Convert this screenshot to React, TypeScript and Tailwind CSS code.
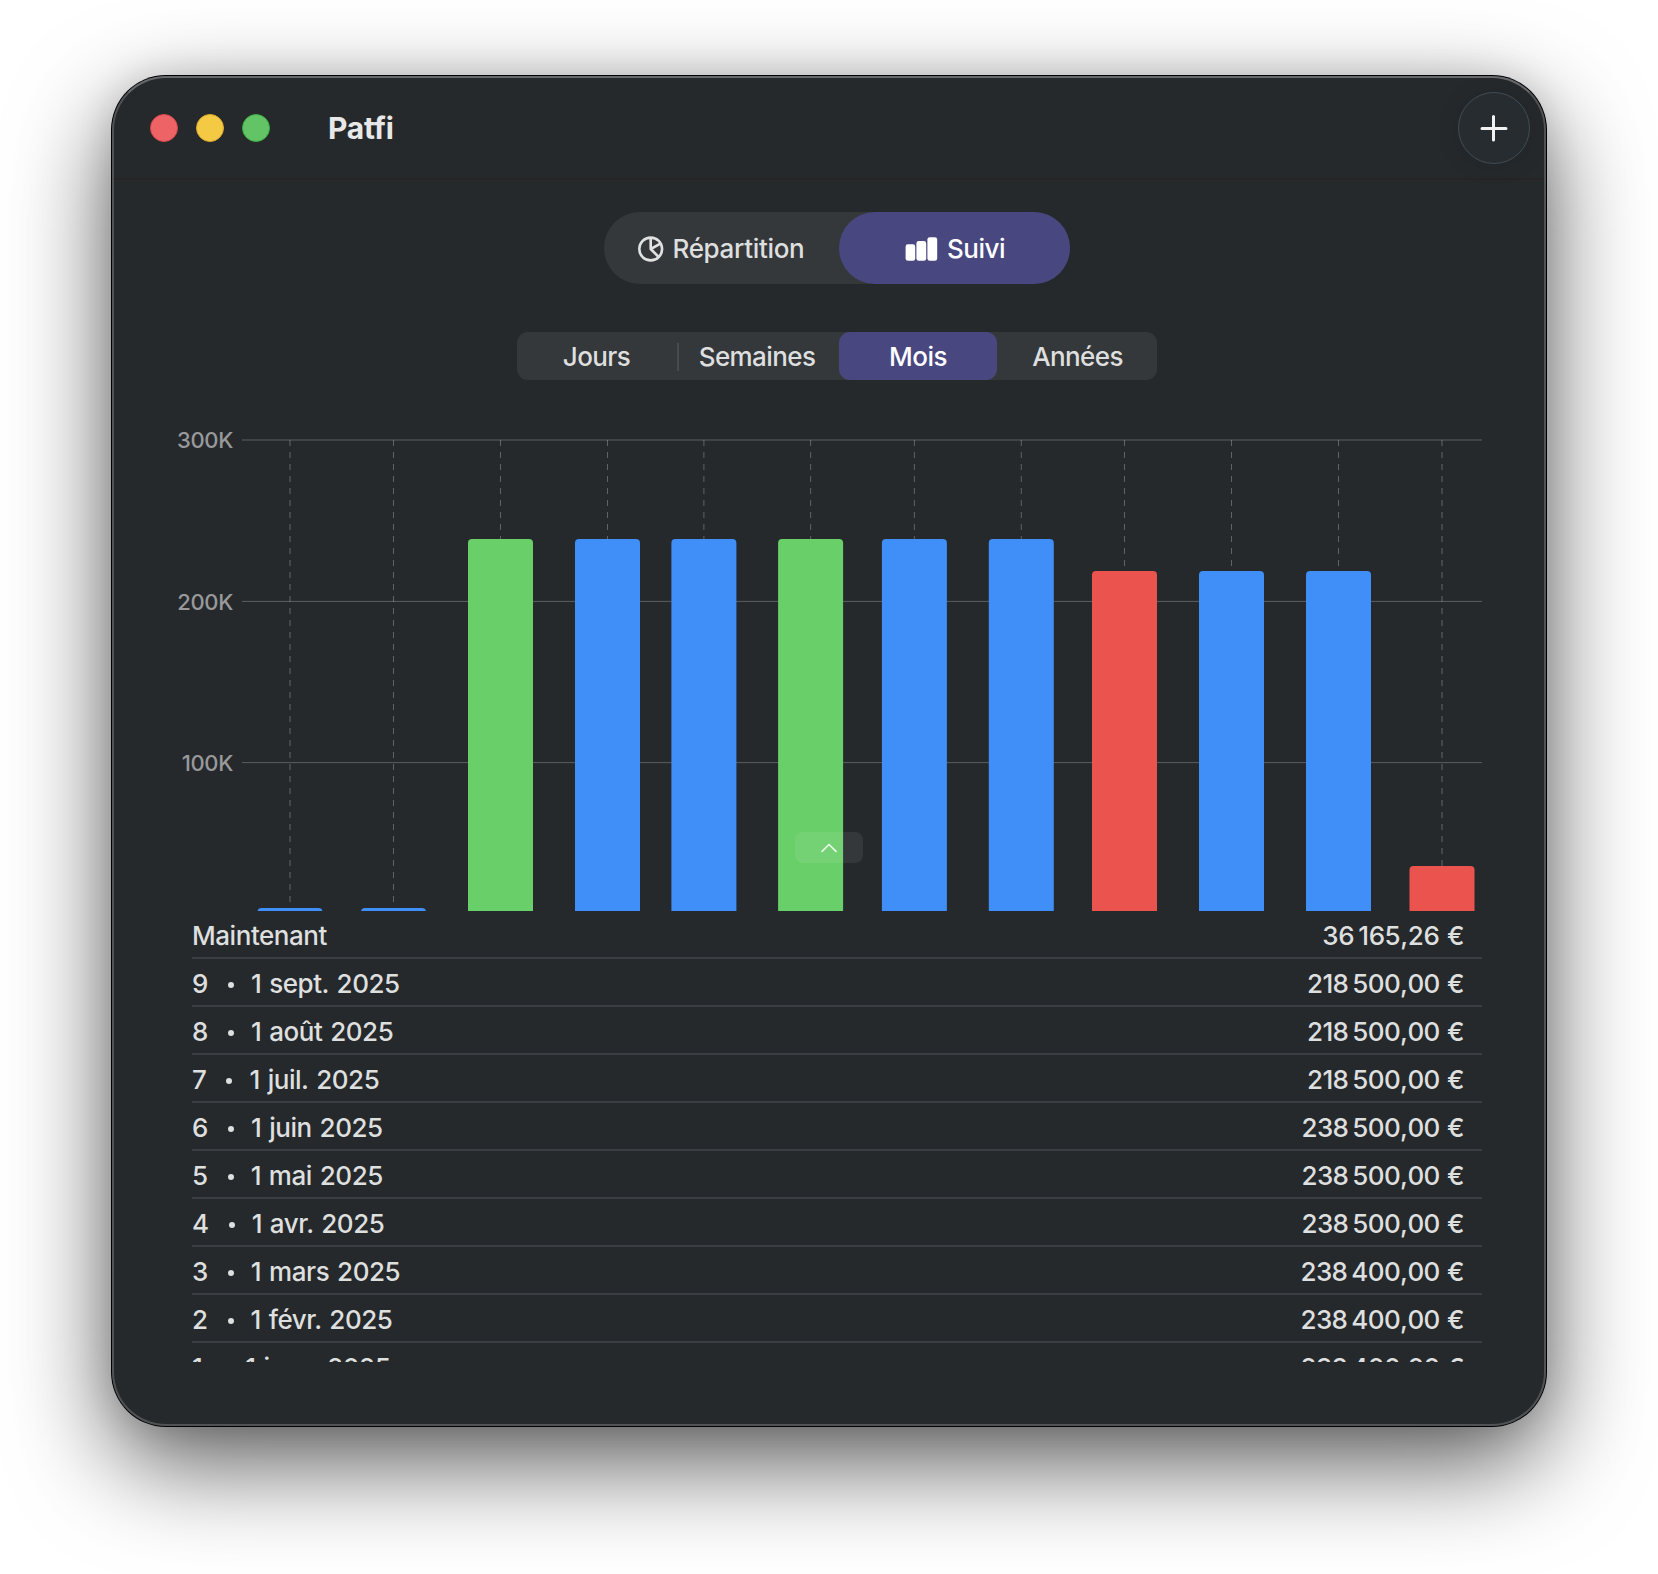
import React from "react";

type Tone = "blue" | "green" | "red";

const tones: Record<Tone, string> = {
  blue: "#408ef7",
  green: "#69cf69",
  red: "#eb544e",
};

const bars: { c: number; top: number; tone: Tone }[] = [
  { c: 290, top: 908, tone: "blue" },
  { c: 393.5, top: 908, tone: "blue" },
  { c: 500.5, top: 539, tone: "green" },
  { c: 607.5, top: 539, tone: "blue" },
  { c: 703.9, top: 539, tone: "blue" },
  { c: 810.6, top: 539, tone: "green" },
  { c: 914.4, top: 539, tone: "blue" },
  { c: 1021.3, top: 539, tone: "blue" },
  { c: 1124.5, top: 571, tone: "red" },
  { c: 1231.5, top: 571, tone: "blue" },
  { c: 1338.5, top: 571, tone: "blue" },
  { c: 1442, top: 866, tone: "red" },
];

const grid = [
  { y: 440, base: 448, h: 2, o: 0.13, label: "300K" },
  { y: 601.4, base: 610, h: 1, o: 0.25, label: "200K" },
  { y: 762.6, base: 771, h: 1, o: 0.25, label: "100K" },
];

const rows = [
  { n: "9", d: "1 sept. 2025", v: "218\u2009500,00" },
  { n: "8", d: "1 août 2025", v: "218\u2009500,00" },
  { n: "7", d: "1 juil. 2025", v: "218\u2009500,00" },
  { n: "6", d: "1 juin 2025", v: "238\u2009500,00" },
  { n: "5", d: "1 mai 2025", v: "238\u2009500,00" },
  { n: "4", d: "1 avr. 2025", v: "238\u2009500,00" },
  { n: "3", d: "1 mars 2025", v: "238\u2009400,00" },
  { n: "2", d: "1 févr. 2025", v: "238\u2009400,00" },
  { n: "1", d: "1 janv. 2025", v: "238\u2009400,00" },
];

function TitleBar() {
  return (
    <header className="flex h-[104px] shrink-0 items-center border-b-2 border-[#262425] pl-[38px] pr-4 pt-0.5">
      <div className="flex gap-[18px]">
        <span className="size-7 rounded-full border border-[#d9484a] bg-[#ee6466]" />
        <span className="size-7 rounded-full border border-[#d9a92c] bg-[#f4c944]" />
        <span className="size-7 rounded-full border border-[#3cae40] bg-[#63c466]" />
      </div>
      <h1 className="ml-[58px] text-[30px] font-bold tracking-[-0.25px] text-[#e8e8e8]">Patfi</h1>
      <button className="ml-auto flex size-[72px] items-center justify-center rounded-full border-[1.5px] border-[#414d57] bg-[#262c30] shadow-[0_2px_24px_rgba(0,0,0,0.1)]">
        <svg width="28" height="28" viewBox="0 0 28 28" stroke="#f2f2f2" strokeWidth="3" strokeLinecap="round">
          <path d="M2 14.5H26M13.5 2.5V26" />
        </svg>
      </button>
    </header>
  );
}

function PieIcon() {
  return (
    <svg className="mt-0.5" width="26" height="26" viewBox="0 0 26 26" fill="none" stroke="#e0e1e1" strokeWidth="2.6" strokeLinejoin="round">
      <circle cx="12.7" cy="13" r="11.4" />
      <path d="M12.7 1.6V13L20.7 21M12.7 13L22.9 7.4" />
    </svg>
  );
}

function BarsIcon() {
  return (
    <svg className="mt-0.5" width="33" height="25" viewBox="0 0 33 25" fill="#fff">
      <rect x="0.6" y="7.3" width="9.6" height="16.5" rx="2.4" />
      <rect x="11.4" y="4" width="9.8" height="19.8" rx="2.4" />
      <rect x="22.4" y="0.2" width="9.8" height="23.6" rx="2.4" />
    </svg>
  );
}

function Chart() {
  return (
    <div className="relative mt-[39px] h-[492px] w-full">
      <svg className="block" width="1434" height="492" viewBox="112 419 1434 492">
        {grid.map((g) => (
          <g key={g.label}>
            <rect x="242" y={g.y - g.h / 2} width="1240" height={g.h} fill="#fff" opacity={g.o} />
            <text x="233" y={g.base} textAnchor="end" fill="#98999b" className="text-[22px] font-medium tracking-[-0.35px]">
              {g.label}
            </text>
          </g>
        ))}
        {bars.map((b) => (
          <g key={b.c}>
            <line
              x1={b.c}
              x2={b.c}
              y1="440"
              y2="911"
              stroke="#fff"
              strokeOpacity={b.c % 1 ? 0.27 : 0.14}
              strokeWidth={b.c % 1 ? 1 : 2}
              strokeDasharray="6 6"
            />
            <rect x={b.c - 32.5} y={b.top} width="65" height={930 - b.top} rx="4" fill={tones[b.tone]} />
          </g>
        ))}
      </svg>
      <button className="absolute left-[683px] top-[413px] flex h-[31px] w-[68px] items-center justify-center rounded-lg bg-white/[0.07] pr-px">
        <svg width="16" height="10" viewBox="0 0 16 10" fill="none" stroke="#fff" strokeOpacity="0.85" strokeWidth="1.7" strokeLinecap="round" strokeLinejoin="round">
          <path d="M1 8.3L8 1.5L15 8.3" />
        </svg>
      </button>
    </div>
  );
}

export default function App() {
  return (
    <div className="h-[1574px] w-[1658px] overflow-hidden bg-white px-[112px] pt-[76px] font-[Inter,sans-serif] text-[26px] font-medium text-[#dedfdf]">
      <main className="relative flex h-[1350px] w-[1434px] flex-col overflow-visible rounded-[54px] bg-[#25292c] shadow-[0_0_0_1px_#000,0_36px_100px_rgba(0,0,0,0.66),0_0_36px_rgba(0,0,0,0.12)]">
        <TitleBar />
        <nav className="ml-[492px] mt-8 flex h-[72px] w-[466px] rounded-full bg-[#35383b]">
          <button className="flex w-[235px] items-center pl-[33.5px]">
            <PieIcon />
            <span className="ml-[9px] tracking-[-0.33px]">Répartition</span>
          </button>
          <button className="flex w-[231px] items-center rounded-full bg-[#484780] pl-[66px] text-white">
            <BarsIcon />
            <span className="ml-[9px] tracking-[-0.5px]">Suivi</span>
          </button>
        </nav>
        <nav className="ml-[405px] mt-12 grid h-12 w-[640px] grid-cols-[161px_161px_158px_160px] items-center rounded-[11px] bg-[#35383b] text-center tracking-[-0.6px]">
          <span className="-ml-[2px]">Jours</span>
          <span className="relative pr-[3px]">
            <i className="absolute left-[-1px] top-[6px] h-7 w-0.5 bg-[#484b4e]" />
            Semaines
          </span>
          <span className="flex h-12 items-center justify-center rounded-[11px] bg-[#484780] tracking-[-0.5px] text-white">Mois</span>
          <span className="pl-px">Années</span>
        </nav>
        <Chart />
        <section className="ml-20 mr-16 h-[451px] overflow-hidden tracking-[-0.45px]">
          <div className="flex h-12 items-center justify-between border-b-2 border-[#3b3e42] pr-[18px] pt-[3px]">
            <span>Maintenant</span>
            <span className="tracking-[-0.4px] [font-kerning:none] [word-spacing:1px]">36{"\u2009"}165,26 €</span>
          </div>
          {rows.map((r) => (
            <div key={r.n} className="flex h-12 items-center justify-between border-b-2 border-[#3b3e42] pr-[18px] pt-[3px]">
              <div className="flex items-center">
                <span>{r.n}</span>
                <span className="ml-5 mr-[17px] mt-0.5 size-1.5 rounded-full bg-[#dedfdf]" />
                <span className="[word-spacing:1.4px]">{r.d}</span>
              </div>
              <span className="tracking-[-0.6px] [font-kerning:none] [word-spacing:1px]">{r.v} €</span>
            </div>
          ))}
        </section>
        <div className="pointer-events-none absolute inset-0 rounded-[54px] border-2 border-white/20 border-t-white/30" />
      </main>
    </div>
  );
}
